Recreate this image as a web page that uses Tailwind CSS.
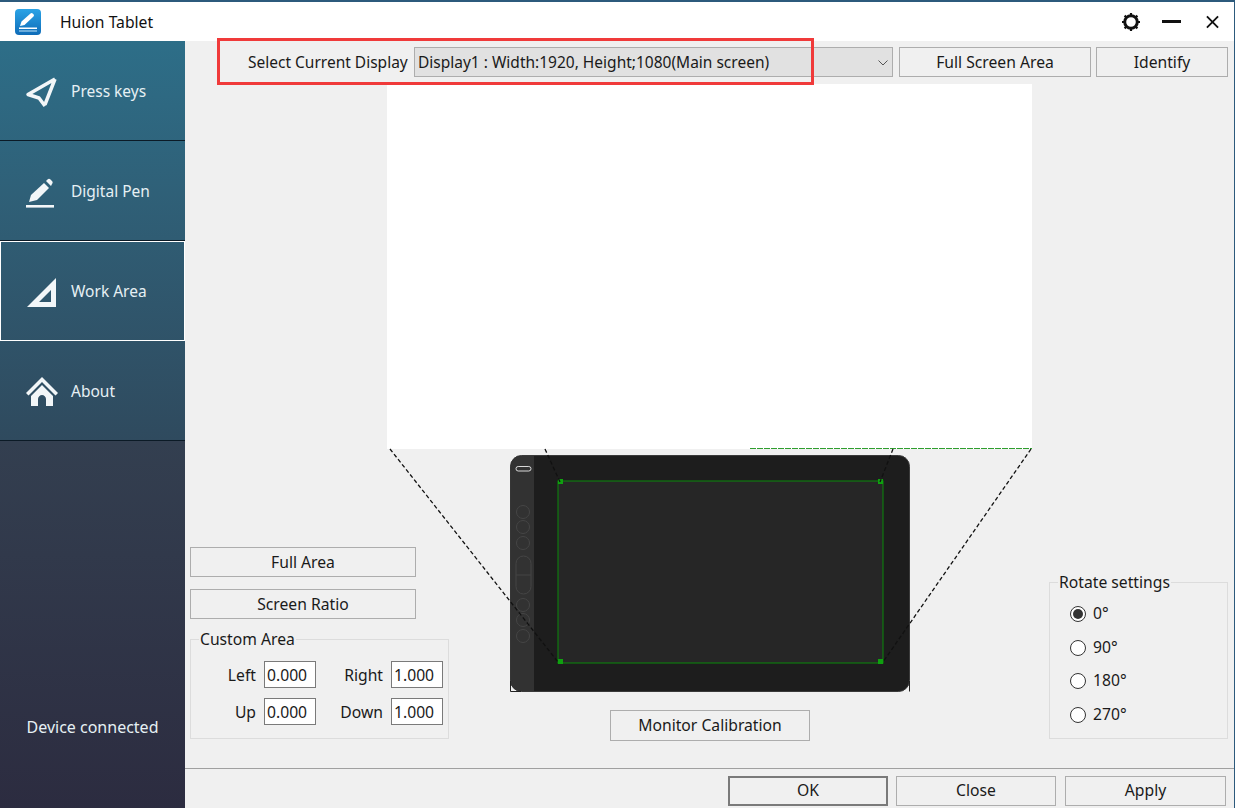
<!DOCTYPE html>
<html lang="en">
<head>
    <meta charset="UTF-8">
    <title>Huion Tablet</title>
    <script src="https://cdn.jsdelivr.net/npm/@tailwindcss/browser@4"></script>
</head>
<body class="w-[1235px] h-[808px] overflow-hidden bg-[#f0f0f0] font-['Noto_Sans',sans-serif] text-[15.7px] text-[#1a1a1a] border-t-2 border-r border-[#2c5a7c] flex flex-col">
    <!-- title bar -->
    <header class="h-[39px] shrink-0 bg-white flex items-center pl-[15px]">
        <svg class="w-[26px] h-[26px]" viewBox="0 0 26 26">
            <defs><linearGradient id="logo" x1="0" y1="0" x2="0" y2="1"><stop offset="0" stop-color="#2aa3e6"/><stop offset="1" stop-color="#0f6cb8"/></linearGradient></defs>
            <rect width="26" height="26" rx="4" fill="url(#logo)"/>
            <path d="M5 17l1.500-4.500L15.500 4.500a1.600 1.600 0 0 1 2.200 0l.8.8a1.600 1.600 0 0 1 0 2.200L9.500 16z" fill="#fff"/>
            <rect x="4" y="18.500" width="18" height="1.500" fill="#fff"/>
            <rect x="4" y="21.500" width="18" height="1" fill="#bfe3f8"/>
        </svg>
        <span class="ml-[19px] pt-[2px] text-[#111]">Huion Tablet</span>
        <div class="ml-auto flex items-center">
            <svg class="w-[20px] h-[20px]" viewBox="0 0 20 20" fill="none">
                <circle cx="10" cy="10" r="6.300" stroke="#111" stroke-width="3"/>
                <path d="M10 1v3M10 16v3M1 10h3M16 10h3M3.600 3.600l2.100 2.100M14.300 14.300l2.100 2.100M3.600 16.400l2.100-2.100M14.300 5.700l2.100-2.100" stroke="#111" stroke-width="2.200"/>
            </svg>
            <span class="ml-[21px] w-[19px] h-[3px] bg-[#111]"></span>
            <svg class="ml-[25px] mr-[15px] w-[13px] h-[14px]" viewBox="0 0 14 14" fill="none"><path d="M1 1l12 12M13 1L1 13" stroke="#111" stroke-width="2"/></svg>
        </div>
    </header>

    <div class="flex-1 flex min-h-0">
        <!-- sidebar -->
        <nav class="w-[185px] shrink-0 flex flex-col text-[#e6f0f4]">
            <div class="h-[400px] shrink-0 flex flex-col text-[15.500px] bg-linear-to-b from-[#2d6e88] to-[#2f4a5e]">
                <a class="h-[100px] border-b border-[#0b1a26] flex items-center pt-[3px] pl-[25px] gap-[14px]">
                    <svg class="w-[32px] h-[32px]" viewBox="0 0 32 32" fill="none"><path d="M30 3L3 18.500l11 3.500 6 8M30 3l-10 25.500" stroke="#f2f6f8" stroke-width="3.500" stroke-linejoin="round"/></svg>
                    Press keys
                </a>
                <a class="h-[100px] border-b border-[#0b1a26] flex items-center pt-[3px] pl-[26px] gap-[15px]">
                    <svg class="w-[30px] h-[32px]" viewBox="0 0 30 32" fill="#f2f6f8">
                        <path d="M3 26l2-7L18 7l5 5L11 24z"/>
                        <path d="M20 5l1.500-1.500c1-.9 2-.9 3 0l1.500 1.500c.9 1 .9 2 0 3L25 10z"/>
                        <rect x="0" y="29" width="28" height="2.600"/>
                    </svg>
                    Digital Pen
                </a>
                <a class="h-[100px] border border-white flex items-center pt-[2px] pl-[25px] gap-[14px]">
                    <svg class="w-[31px] h-[31px]" viewBox="0 0 31 31"><path fill-rule="evenodd" fill="#f2f6f8" d="M30 1v29H1zM25 13L13 25h12z"/></svg>
                    Work Area
                </a>
                <a class="h-[100px] border-b border-[#0b1a26] flex items-center pt-[3px] pl-[26px] gap-[13px]">
                    <svg class="w-[32px] h-[32px]" viewBox="0 0 32 32" fill="#f2f6f8"><path d="M16 1L0 17l2.500 2.500L16 6l13.500 13.500L32 17z"/><path d="M5 20L16 9l11 11v10h-7v-7c0-2-2-4-4-4s-4 2-4 4v7H5z"/></svg>
                    About
                </a>
            </div>
            <div class="flex-1 flex flex-col bg-linear-to-b from-[#333f50] to-[#2c2c40]">
                <p class="mt-auto mb-[69px] text-center text-[16px]">Device connected</p>
            </div>
        </nav>

        <!-- main panel -->
        <main class="relative flex-1 flex flex-col min-w-0">
            <!-- display row -->
            <div class="h-[43px] shrink-0 flex items-start pt-[6px] pl-[63px]">
                <label class="w-[160px] h-[30px] leading-[30px] whitespace-nowrap text-[15.500px]">Select Current Display</label>
                <div class="ml-[6px] w-[479px] h-[30px] pt-[2px] bg-[#e1e1e1] border border-[#adadad] flex items-center pl-[3px] pr-[4px] text-[15.500px]">
                    Display1 : Width:1920, Height;1080(Main screen)
                    <svg class="ml-auto w-[10px] h-[6px]" viewBox="0 0 10 6" fill="none"><path d="M.5.500L5 5 9.500.500" stroke="#555"/></svg>
                </div>
                <button class="ml-[6px] w-[192px] h-[30px] pt-[2px] bg-[#f0f0f0] border border-[#adadad]">Full Screen Area</button>
                <button class="ml-[5px] w-[132px] h-[30px] pt-[2px] bg-[#f0f0f0] border border-[#adadad]">Identify</button>
            </div>

            <!-- mapped display -->
            <div class="ml-[202px] w-[645px] h-[365px] shrink-0 bg-white"></div>

            <div class="flex-1 flex items-end pl-[5px] pb-[29px] min-h-0">
                <!-- area controls -->
                <div class="w-[259px] shrink-0">
                    <button class="block w-[226px] h-[30px] pt-[2px] bg-[#f0f0f0] border border-[#adadad]">Full Area</button>
                    <button class="block mt-[12px] w-[226px] h-[30px] pt-[2px] bg-[#f0f0f0] border border-[#adadad]">Screen Ratio</button>
                    <fieldset class="mt-[10px] h-[110px] border border-[#dcdcdc] pl-[1px]">
                        <legend class="ml-[7px] px-[1px] h-[20px] leading-[20px]">Custom Area</legend>
                        <div class="mt-[12px] flex items-center">
                            <span class="w-[64px] pt-[2px] text-right">Left</span>
                            <input class="ml-[8px] w-[52px] h-[27px] bg-white border border-[#7a7a7a] px-[2px] text-[15.700px]" value="0.000">
                            <span class="w-[67px] pt-[2px] text-right">Right</span>
                            <input class="ml-[8px] w-[52px] h-[27px] bg-white border border-[#7a7a7a] px-[2px] text-[15.700px]" value="1.000">
                        </div>
                        <div class="mt-[10px] flex items-center">
                            <span class="w-[64px] pt-[2px] text-right">Up</span>
                            <input class="ml-[8px] w-[52px] h-[27px] bg-white border border-[#7a7a7a] px-[2px] text-[15.700px]" value="0.000">
                            <span class="w-[67px] pt-[2px] text-right">Down</span>
                            <input class="ml-[8px] w-[52px] h-[27px] bg-white border border-[#7a7a7a] px-[2px] text-[15.700px]" value="1.000">
                        </div>
                    </fieldset>
                </div>

                <!-- tablet -->
                <div class="ml-[61px] w-[400px] shrink-0 self-start mt-[6px] flex flex-col items-center">
                    <svg class="block w-[400px] h-[237px]" viewBox="0 0 400 237" fill="none">
                        <rect x=".5" y=".5" width="399" height="236" rx="11" fill="#1d1d1d" stroke="#3a3a3a"/>
                        <path d="M11 1H24V236H11A10.500 10.500 0 0 1 .5 225.500V11.500A10.500 10.500 0 0 1 11 1z" fill="#323232"/>
                        <rect x="48" y="26" width="325" height="182" fill="#262626" stroke="#0b8a0b"/>
                        <rect x="48" y="24" width="5" height="5" fill="#10a010"/>
                        <rect x="368" y="24" width="5" height="5" fill="#10a010"/>
                        <rect x="48" y="204" width="5" height="5" fill="#10a010"/>
                        <rect x="368" y="204" width="5" height="5" fill="#10a010"/>
                        <rect x="6" y="11.500" width="15" height="4.500" rx="2.200" stroke="#d8d8d8"/>
                        <g stroke="#454545">
                            <circle cx="13" cy="57" r="6.500"/><circle cx="13" cy="72" r="6.500"/><circle cx="13" cy="88" r="6.500"/>
                            <rect x="6" y="101" width="15" height="38" rx="7.500"/><path d="M6 120h15"/>
                            <circle cx="13" cy="150" r="6.500"/><circle cx="13" cy="165" r="6.500"/><circle cx="13" cy="181" r="6.500"/>
                        </g>
                        <path d="M.5 226v10.500H11M399.500 226v10.500" stroke="#222"/>
                    </svg>
                    <button class="mt-[18px] w-[200px] h-[31px] bg-[#f0f0f0] border border-[#adadad]">Monitor Calibration</button>
                </div>

                <!-- rotation -->
                <fieldset class="ml-[139px] w-[179px] shrink-0 h-[167px] border border-[#dcdcdc]">
                    <legend class="ml-[8px] px-[1px] h-[20px] leading-[20px]">Rotate settings</legend>
                    <div class="pl-[20px] pt-[12px] flex flex-col gap-[13.500px]">
                        <label class="h-[20px] flex items-center gap-[7px]"><span class="w-[16px] h-[16px] rounded-full border border-[#333] bg-white flex items-center justify-center"><span class="w-[10px] h-[10px] rounded-full bg-[#333]"></span></span>0°</label>
                        <label class="h-[20px] flex items-center gap-[7px]"><span class="w-[16px] h-[16px] rounded-full border border-[#333] bg-white"></span>90°</label>
                        <label class="h-[20px] flex items-center gap-[7px]"><span class="w-[16px] h-[16px] rounded-full border border-[#333] bg-white"></span>180°</label>
                        <label class="h-[20px] flex items-center gap-[7px]"><span class="w-[16px] h-[16px] rounded-full border border-[#333] bg-white"></span>270°</label>
                    </div>
                </fieldset>
            </div>

            <!-- dialog buttons -->
            <footer class="h-[40px] shrink-0 border-t border-[#a0a0a0] flex items-start pt-[7px] pl-[543px]">
                <button class="w-[160px] h-[30px] bg-[#f0f0f0] border-2 border-[#7a7a7a]">OK</button>
                <button class="ml-[8px] w-[160px] h-[30px] bg-[#f0f0f0] border border-[#adadad]">Close</button>
                <button class="ml-[9px] w-[161px] h-[30px] bg-[#f0f0f0] border border-[#adadad]">Apply</button>
            </footer>

            <!-- mapping guides over the tablet -->
            <svg class="absolute left-0 top-0 w-[1049px] h-[727px] pointer-events-none" viewBox="0 0 1049 727" fill="none">
                <path d="M565 407.500H847" stroke="#2f9e2f" stroke-dasharray="6 1"/>
                <path d="M205 408L373 621M846 408L698 621M360 408L375 441M708 408L695 441" stroke="#111" stroke-width="1.300" stroke-dasharray="4 2.500"/>
            </svg>

            <!-- highlight added to the screenshot -->
            <div class="absolute left-[32px] top-[-3px] w-[597px] h-[47px] border-[3px] border-[#f03a3a]"></div>
        </main>
    </div>
</body>
</html>
